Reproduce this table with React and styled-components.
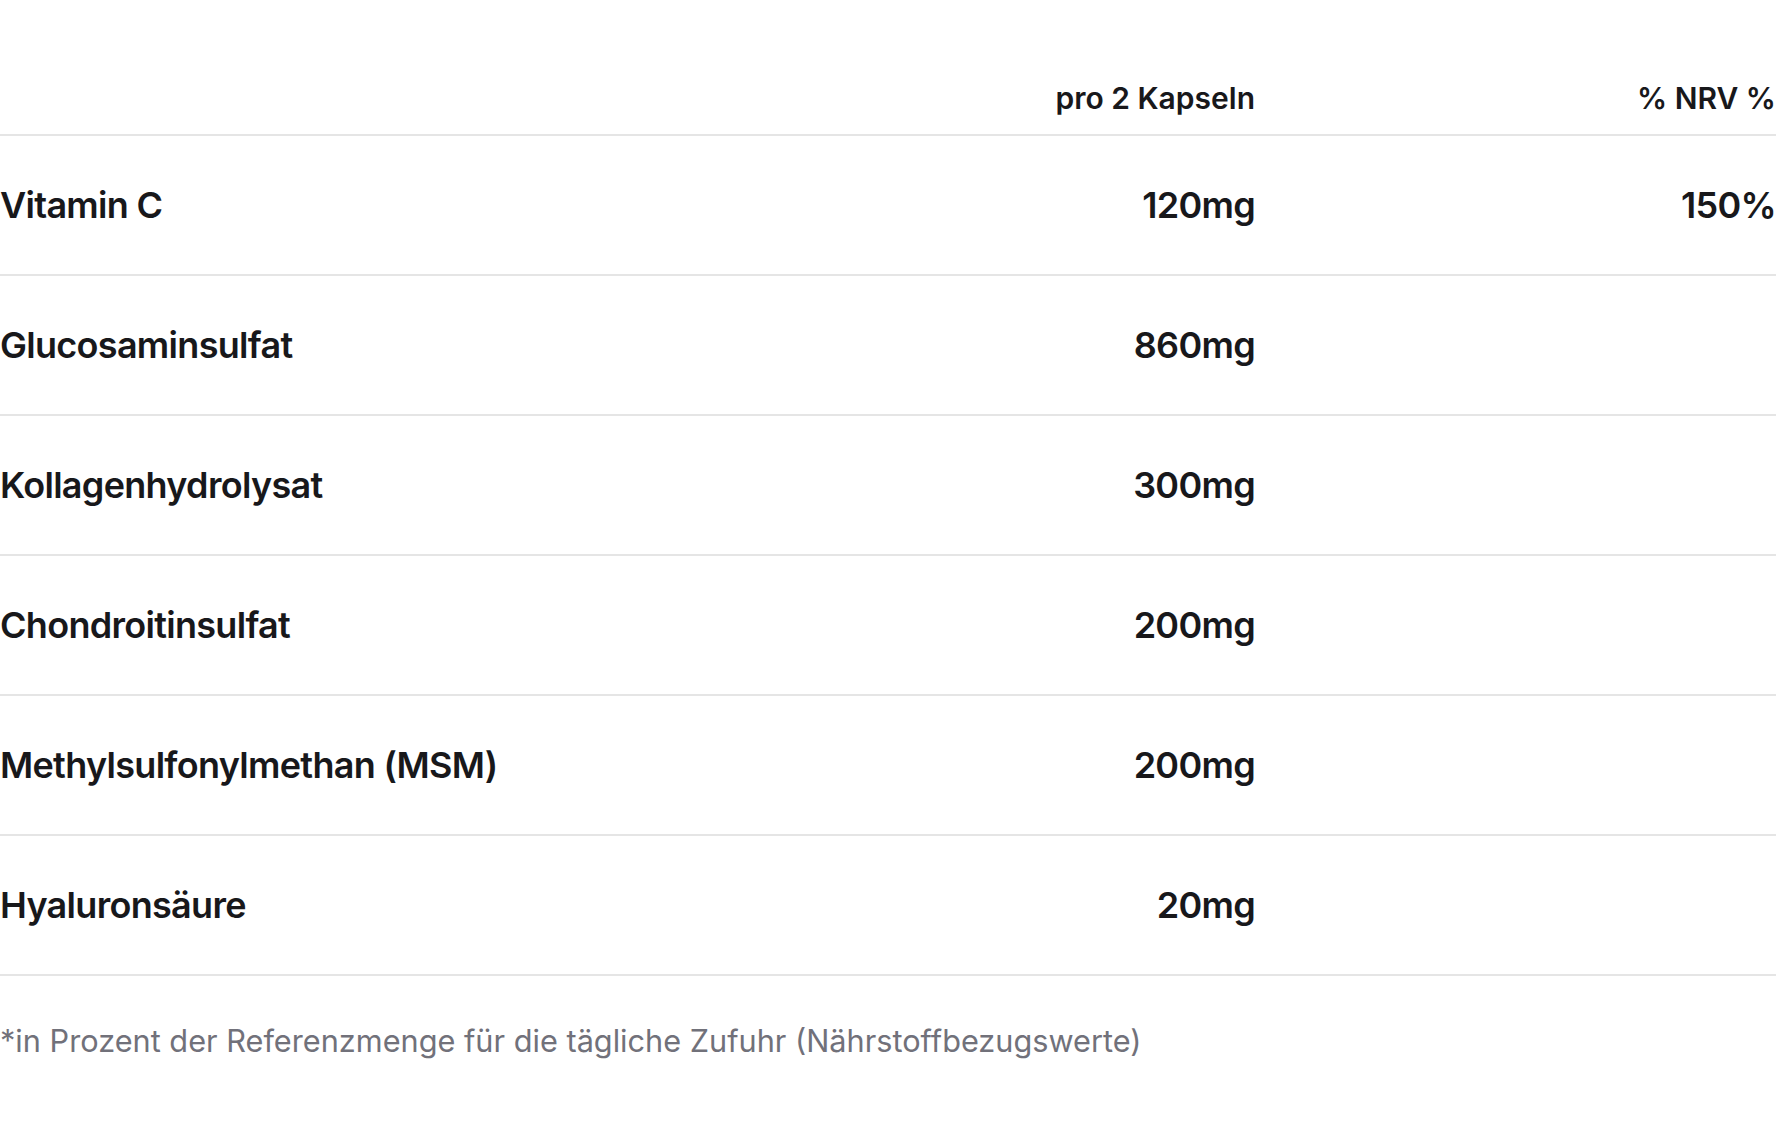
import React from "react";
import styled, { createGlobalStyle } from "styled-components";

const Global = createGlobalStyle`
  html, body { margin: 0; padding: 0; background: #ffffff; }
  body { font-family: Inter, "Noto Sans", Arial, sans-serif; color: #18181b; }
`;

const Wrapper = styled.section`
  padding-top: 64px;
  width: 100%;
`;

const Table = styled.div`
  display: grid;
  grid-template-columns: 1fr 521px 521px;
`;

const HeadCell = styled.div`
  padding: 12px 0 13px;
  font-size: 30px;
  line-height: 45px;
  font-weight: 600;
  letter-spacing: 0;
  text-align: ${(p) => (p.$right ? "right" : "left")};
  border-bottom: 2px solid #e5e5e5;
  color: #18181b;
`;

const Cell = styled.div`
  padding: 42px 0;
  font-size: 36px;
  line-height: 54px;
  font-weight: 600;
  text-align: ${(p) => (p.$right ? "right" : "left")};
  border-bottom: 2px solid #e5e5e5;
  color: #18181b;
  letter-spacing: -0.7px;
`;

const Note = styled.p`
  margin: 0;
  padding-top: 42px;
  font-size: 30.7px;
  line-height: 45px;
  font-weight: 400;
  color: #71717a;
`;

const rows = [
  ["Vitamin C", "120mg", "150%"],
  ["Glucosaminsulfat", "860mg", ""],
  ["Kollagenhydrolysat", "300mg", ""],
  ["Chondroitinsulfat", "200mg", ""],
  ["Methylsulfonylmethan (MSM)", "200mg", ""],
  ["Hyaluronsäure", "20mg", ""],
];

export default function App() {
  return (
    <Wrapper>
      <Global />
      <Table>
        <HeadCell />
        <HeadCell $right>pro 2 Kapseln</HeadCell>
        <HeadCell $right>% NRV %</HeadCell>
        {rows.map(([name, amount, nrv]) => (
          <React.Fragment key={name}>
            <Cell>{name}</Cell>
            <Cell $right>{amount}</Cell>
            <Cell $right>{nrv}</Cell>
          </React.Fragment>
        ))}
      </Table>
      <Note>*in Prozent der Referenzmenge für die tägliche Zufuhr (Nährstoffbezugswerte)</Note>
    </Wrapper>
  );
}
